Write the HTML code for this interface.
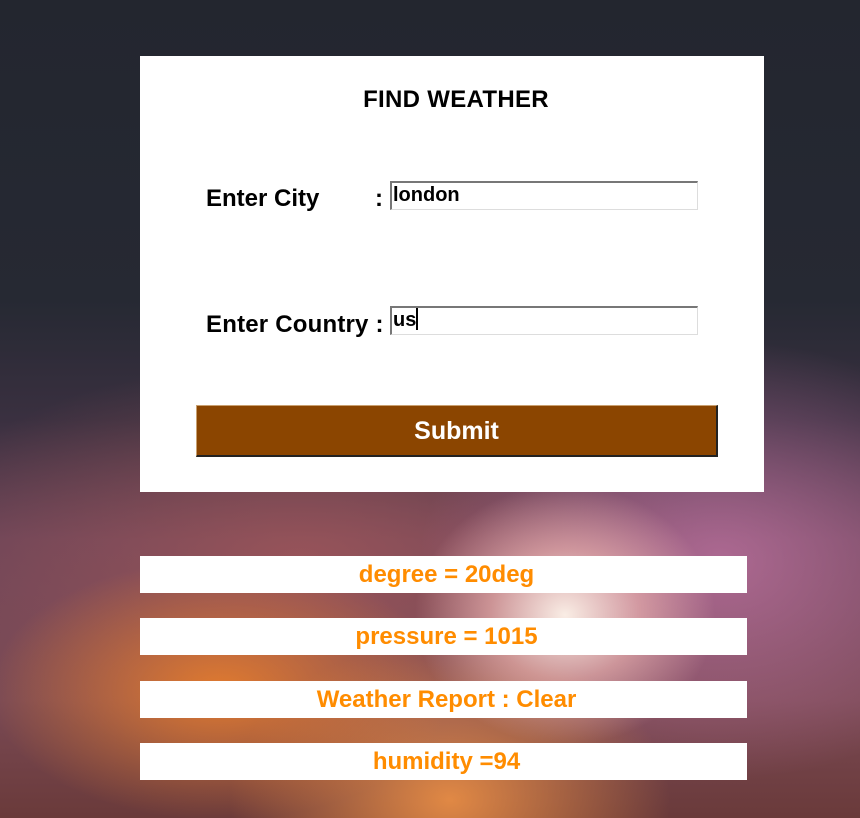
<!DOCTYPE html>
<html><head><meta charset="utf-8"><style>
*{margin:0;padding:0;box-sizing:border-box}
html,body{width:860px;height:818px;overflow:hidden}
body{position:relative;font-family:"Liberation Sans",Arial,sans-serif;font-weight:bold;
background:
radial-gradient(ellipse 150px 130px at 565px 615px,rgba(255,245,235,0.95),rgba(255,200,190,0.55) 50%,rgba(255,180,180,0) 100%),
radial-gradient(ellipse 230px 130px at 220px 690px,rgba(240,130,40,0.85),rgba(200,90,40,0) 100%),
radial-gradient(ellipse 220px 160px at 450px 800px,rgba(245,150,70,0.85),rgba(200,90,40,0) 100%),
radial-gradient(ellipse 300px 220px at 720px 560px,rgba(200,120,170,0.7),rgba(150,80,130,0) 100%),
radial-gradient(ellipse 400px 200px at 300px 560px,rgba(170,90,90,0.7),rgba(120,60,80,0) 100%),
linear-gradient(180deg,#23262f 0px,#262933 300px,#3a3040 420px,#6a4458 540px,#7a4a55 700px,#6a3a3a 818px);}
.card{position:absolute;left:140px;top:56px;width:624px;height:436px;background:#fff}
h1{position:absolute;top:30px;left:0;width:100%;text-align:center;font-size:24px;color:#000;padding-left:8px;letter-spacing:0.3px}
.lbl{position:absolute;left:66px;font-size:24px;color:#000}
.inp{position:absolute;left:250px;width:308px;height:29px;border:1px solid #ddd;border-top:2px solid #777;border-left:2px solid #777;font-size:20px;padding-left:1px;line-height:24px;color:#000}
.btn{position:absolute;left:56px;top:349px;width:522px;height:52px;background:#8b4500;border:1px solid #c9a070;border-right:2px solid #222;border-bottom:2px solid #222;color:#fff;font-size:25px;text-align:center;line-height:50px}
.r{position:absolute;left:140px;width:607px;height:37px;background:#fff;color:#ff8c00;font-size:24px;text-align:center;line-height:37px;padding-left:6px}
</style></head><body>
<div class="card">
<h1>FIND WEATHER</h1>
<div class="lbl" style="top:129px">Enter City</div>
<div class="lbl" style="top:129px;left:235px">:</div>
<div class="inp" style="top:125px">london</div>
<div class="lbl" style="top:255px;letter-spacing:0.2px">Enter Country :</div>
<div class="inp" style="top:250px">us<span style="display:inline-block;width:2px;height:22px;background:#000;vertical-align:-4px"></span></div>
<div class="btn">Submit</div>
</div>
<div class="r" style="top:556px">degree = 20deg</div>
<div class="r" style="top:618px">pressure = 1015</div>
<div class="r" style="top:681px">Weather Report : Clear</div>
<div class="r" style="top:743px">humidity =94</div>
</body></html>
